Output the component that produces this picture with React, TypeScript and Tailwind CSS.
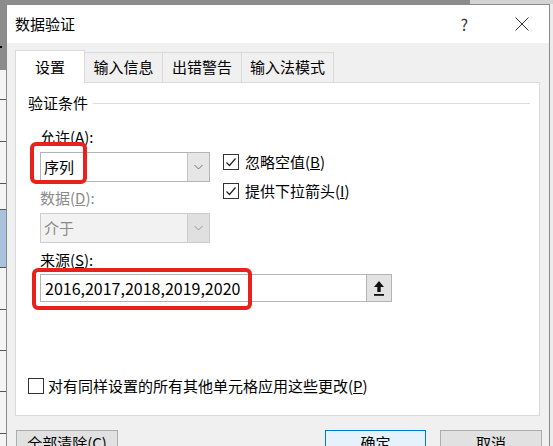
const FONT = "font-['Microsoft_YaHei','Noto_Sans_CJK_SC',sans-serif]";

function CheckBox({ checked }: { checked: boolean }) {
  return (
    <span className="flex h-[16px] w-[16px] shrink-0 items-center justify-center border border-[#333] bg-white">
      {checked && (
        <svg width="12" height="12" viewBox="0 0 12 12">
          <polyline points="1.5,6.5 4.5,9.5 10.5,2.5" fill="none" stroke="#222" strokeWidth="1.2" />
        </svg>
      )}
    </span>
  );
}

function Chevron({ color }: { color: string }) {
  return (
    <svg width="9" height="6" viewBox="0 0 9 6">
      <polyline points="0.5,1 4.5,5 8.5,1" fill="none" stroke={color} strokeWidth="1" />
    </svg>
  );
}

function Combo({ value, disabled }: { value: string; disabled?: boolean }) {
  return (
    <div
      className={`flex h-[30px] w-[170px] border ${
        disabled ? 'border-[#cccccc] bg-[#f2f2f2] text-[#8a8a8a]' : 'border-[#b4b4b4] bg-white text-black'
      }`}
    >
      <span className="flex flex-1 items-center pl-[3px] text-[15px]">{value}</span>
      <span
        className={`flex w-[22px] items-center justify-center border-l ${
          disabled ? 'border-[#cccccc] bg-[#e0e0e0]' : 'border-[#c4c4c4] bg-[#e6e6e6]'
        }`}
      >
        <Chevron color={disabled ? '#9a9a9a' : '#707070'} />
      </span>
    </div>
  );
}

const TABS = [
  { label: '输入信息', w: 'w-[78px]' },
  { label: '出错警告', w: 'w-[79px]' },
  { label: '输入法模式', w: 'w-[92px]' },
];

function SheetStrip() {
  // slice of the worksheet showing behind the dialog
  return (
    <div className="flex w-[6px] shrink-0 flex-col bg-[#f4f4f4]">
      <div className="relative h-[66px] bg-[#8c8c8c]">
        <span className="absolute left-0 top-[42px] h-[2px] w-[2px] bg-black" />
      </div>
      <div className="h-[30px] border-b border-[#555]" />
      <div className="h-[42px] border-b border-[#555]" />
      <div className="h-[42px] border-b border-[#555]" />
      <div className="h-[26px] border-b border-[#555]" />
      <div className="h-[58px] border-b border-[#555] bg-[#a9c3df]" />
      <div className="h-[42px] border-b border-[#555]" />
      <div className="h-[41px] border-b border-[#555]" />
      <div className="h-[41px] border-b border-[#555]" />
      <div className="h-[42px] border-b border-[#555]" />
    </div>
  );
}

export default function App() {
  return (
    <div className={`flex h-[446px] w-[553px] flex-col overflow-hidden bg-[#e6e6e6] ${FONT}`}>
      <div className="flex h-[4px] shrink-0">
        <div className="w-[470px] bg-[#8c8c8c]" />
        <div className="flex-1 bg-[#d4d4d4]" />
      </div>
      <div className="flex flex-1">
        <SheetStrip />

        {/* Dialog */}
        <div className="flex w-[544px] shrink-0 flex-col border border-[#8a8a8a] bg-[#f0f0f0]">
          <div className="flex h-[38px] shrink-0 items-center bg-white pl-[8px] text-[15px] text-black">
            <span className="flex-1">数据验证</span>
            <span className="mr-[47px] text-[16px] text-[#333]">?</span>
            <svg className="mr-[20px]" width="14" height="14" viewBox="0 0 14 14">
              <path d="M0.5 0.5 L13.5 13.5 M13.5 0.5 L0.5 13.5" stroke="#333" strokeWidth="1" />
            </svg>
          </div>

          {/* Tabs */}
          <div className="mt-[7px] flex items-end pl-[8px] text-[15px] text-black">
            <div className="relative z-10 -mb-px flex h-[33px] w-[70px] items-center justify-center border border-b-0 border-[#d9d9d9] bg-white">
              设置
            </div>
            {TABS.map((t) => (
              <div
                key={t.label}
                className={`flex h-[30px] ${t.w} items-center justify-center border-r border-t border-[#d9d9d9] bg-[#f0f0f0]`}
              >
                {t.label}
              </div>
            ))}
          </div>

          {/* Panel */}
          <div className="relative ml-[8px] flex h-[334px] w-[525px] flex-col border border-[#d9d9d9] bg-white text-[15px] text-black">
            <div className="mt-[10px] flex h-[20px] items-center pl-[12px]">
              <span>验证条件</span>
              <span className="ml-[5px] mr-[9px] h-px flex-1 bg-[#dcdcdc]" />
            </div>

            <div className="mt-[14px] h-[20px] pl-[24px] leading-[20px]">
              允许(<span className="underline">A</span>):
            </div>

            <div className="mt-[5px] flex pl-[24px]">
              <div className="flex flex-col">
                <Combo value="序列" />
                <div className="mt-[6px] h-[20px] leading-[20px] text-[#8a8a8a]">
                  数据(<span className="underline">D</span>):
                </div>
                <div className="mt-[5px]">
                  <Combo value="介于" disabled />
                </div>
              </div>
              <div className="ml-[13px] flex flex-col">
                <div className="flex h-[20px] items-center gap-[6px]">
                  <CheckBox checked />
                  <span>
                    忽略空值(<span className="underline">B</span>)
                  </span>
                </div>
                <div className="mt-[9px] flex h-[20px] items-center gap-[6px]">
                  <CheckBox checked />
                  <span>
                    提供下拉箭头(<span className="underline">I</span>)
                  </span>
                </div>
              </div>
            </div>

            <div className="mt-[7px] h-[20px] pl-[24px] leading-[20px]">
              来源(<span className="underline">S</span>):
            </div>

            <div className="ml-[24px] mt-[4px] flex h-[28px] w-[352px] border border-[#b4b4b4] bg-white">
              <span className="flex flex-1 items-center pl-[4px] text-[16px]">2016,2017,2018,2019,2020</span>
              <span className="flex w-[25px] items-center justify-center border-l border-[#b4b4b4] bg-[#e3e3e3]">
                <svg width="12" height="17" viewBox="0 0 12 17">
                  <path d="M6 1 L11 7 H7.7 V12 H4.3 V7 H1 Z" fill="#111" />
                  <rect x="1" y="14" width="10" height="1.8" fill="#111" />
                </svg>
              </span>
            </div>

            <div className="mt-[74px] flex h-[20px] items-center gap-[4px] pl-[12px]">
              <CheckBox checked={false} />
              <span>
                对有同样设置的所有其他单元格应用这些更改(<span className="underline">P</span>)
              </span>
            </div>

            {/* red annotation boxes */}
            <div className="absolute left-[14px] top-[59px] h-[42px] w-[57px] rounded-[6px] border-4 border-[#e8211c]" />
            <div className="absolute left-[16px] top-[185px] h-[42px] w-[220px] rounded-[6px] border-4 border-[#e8211c]" />
          </div>

          {/* Buttons */}
          <div className="mt-[14px] flex text-[15px] text-black">
            <div className="ml-[9px] flex h-[26px] w-[102px] items-center justify-center border border-[#adadad] bg-[#e1e1e1]">
              全部清除(<span className="underline">C</span>)
            </div>
            <div className="ml-auto flex h-[26px] w-[101px] items-center justify-center border border-[#0078d7] bg-[#e5f1fb]">
              确定
            </div>
            <div className="ml-[14px] mr-[7px] flex h-[26px] w-[102px] items-center justify-center border border-[#adadad] bg-[#e1e1e1]">
              取消
            </div>
          </div>
        </div>

        <div className="flex w-[3px] flex-col bg-[#ececec]" />
      </div>
    </div>
  );
}
